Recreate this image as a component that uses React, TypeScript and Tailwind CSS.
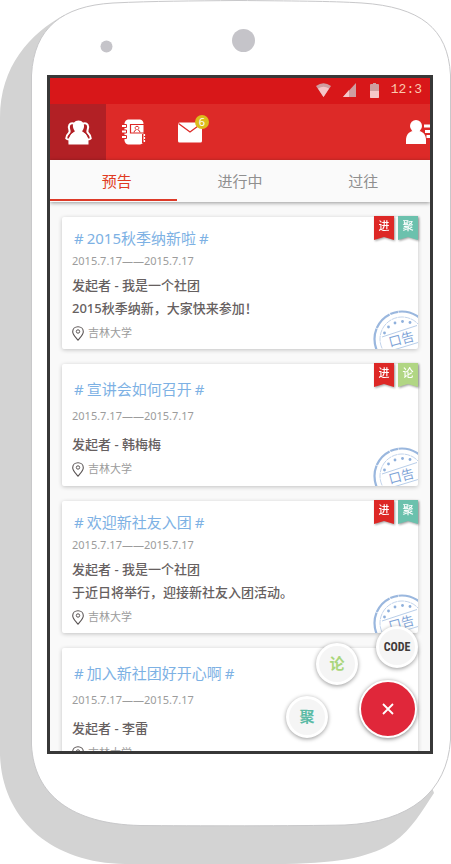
import React from "react";

type Ribbon = { text: string; tone: "red" | "teal" | "green" };

type Activity = {
  title: string;
  date: string;
  lines: string[];
  place: string;
  ribbons: Ribbon[];
  stamped: boolean;
};

const activities: Activity[] = [
  {
    title: "2015秋季纳新啦",
    date: "2015.7.17——2015.7.17",
    lines: ["发起者 - 我是一个社团", "2015秋季纳新，大家快来参加！"],
    place: "吉林大学",
    ribbons: [
      { text: "进", tone: "red" },
      { text: "聚", tone: "teal" },
    ],
    stamped: true,
  },
  {
    title: "宣讲会如何召开",
    date: "2015.7.17——2015.7.17",
    lines: ["发起者 - 韩梅梅"],
    place: "吉林大学",
    ribbons: [
      { text: "进", tone: "red" },
      { text: "论", tone: "green" },
    ],
    stamped: true,
  },
  {
    title: "欢迎新社友入团",
    date: "2015.7.17——2015.7.17",
    lines: ["发起者 - 我是一个社团", "于近日将举行，迎接新社友入团活动。"],
    place: "吉林大学",
    ribbons: [
      { text: "进", tone: "red" },
      { text: "聚", tone: "teal" },
    ],
    stamped: true,
  },
  {
    title: "加入新社团好开心啊",
    date: "2015.7.17——2015.7.17",
    lines: ["发起者 - 李雷"],
    place: "吉林大学",
    ribbons: [],
    stamped: false,
  },
];

const ribbonTone = {
  red: "bg-[#dd2826]",
  teal: "bg-[#6bc1ad]",
  green: "bg-[#b1d684]",
};

function PhoneBody() {
  return (
    <svg
      className="absolute inset-0 h-full w-full"
      viewBox="0 0 451 864"
      preserveAspectRatio="none"
      aria-hidden="true"
    >
      <path
        d="M64 15 C30 34 0 66 0 118 V755 C2 818 50 863 125 864 H285 C345 863 372 856 394 842 C412 829 422 811 434 793 L400 700 L100 60 Z"
        fill="#d3d3d3"
      />
      <path
        d="M31.500 75 C34 28 62 6 113 3 C155 1 190 1 238 0.500 C290 1 330 1 362 3 C420 7 448 28 450.500 75 V740 C447 792 410 822 345 825 C300 826 190 826 140 825.500 C72 824 34 795 31.500 745 Z"
        fill="#ffffff"
        stroke="#c8c8ca"
        strokeWidth="1"
      />
      <circle cx="106.500" cy="46.500" r="6" fill="#c5c4c9" />
      <circle cx="243.500" cy="40.500" r="11.500" fill="#c5c4c9" />
    </svg>
  );
}

function StatusBar() {
  return (
    <div className="flex h-[26px] shrink-0 items-center justify-end bg-[#d81719] pr-2 pb-0.5">
      <svg className="mr-3" width="15" height="14" viewBox="0 0 15 14" aria-hidden="true">
        <path d="M0 3 Q7.500 -2.500 15 3 L7.500 14 Z" fill="#cf9ea0" />
        <path d="M2 5.500 Q7.500 2 13 5.500 L7.500 14 Z" fill="#f6c6c8" />
      </svg>
      <svg className="mr-3.5" width="13" height="14" viewBox="0 0 13 14" aria-hidden="true">
        <path d="M13 0 V14 H0 Z" fill="#cf9ea0" />
        <path d="M6 7 V14 H0 Z" fill="#f6c6c8" />
      </svg>
      <svg className="mr-3" width="9" height="15" viewBox="0 0 9 15" aria-hidden="true">
        <path d="M3 0 H6 V1 H8 Q9 1 9 2 V14 Q9 15 8 15 H1 Q0 15 0 14 V2 Q0 1 1 1 H3 Z" fill="#cf9ea0" />
        <path d="M0 8 H9 V14 Q9 15 8 15 H1 Q0 15 0 14 Z" fill="#f6c6c8" />
      </svg>
      <span className="font-['Liberation_Mono',monospace] text-[13px] leading-4 text-[#fbc9ae]">12:3</span>
    </div>
  );
}

function GroupIcon() {
  return (
    <svg width="27" height="25" viewBox="0 0 27 25" aria-hidden="true">
      <g fill="none" stroke="#fff" strokeWidth="2" strokeLinejoin="round" strokeLinecap="round">
        <path d="M8.500 3.500 C4.500 2.500 3 6 4.300 9.500 C5 11.500 5 12.500 3.500 13.500 C1.800 15 1.200 17 1.200 18.500 C2 19.500 3 19.500 4 19.500" />
        <path d="M18.500 3.500 C22.500 2.500 24 6 22.700 9.500 C22 11.500 22 12.500 23.500 13.500 C25.200 15 25.800 17 25.800 18.500 C25 19.500 24 19.500 23 19.500" />
      </g>
      <path
        d="M13.500 0.500 C17.500 0.500 19.500 3.500 19 7 C18.700 9 17.800 10.300 17 11.300 C21.500 13 24 16.500 23.500 24.500 H3.500 C3 16.500 5.500 13 10 11.300 C9.200 10.300 8.300 9 8 7 C7.500 3.500 9.500 0.500 13.500 0.500 Z"
        fill="#fff"
      />
      <path d="M7 8 C7.300 10 8 11 8.500 11.500 C5.500 13 4 15 3.300 17.500" fill="none" stroke="#b22025" strokeWidth="1.200" />
      <path d="M20 8 C19.700 10 19 11 18.500 11.500 C21.500 13 23 15 23.700 17.500" fill="none" stroke="#b22025" strokeWidth="1.200" />
    </svg>
  );
}

function ContactsIcon() {
  return (
    <svg width="24" height="26" viewBox="0 0 24 26" aria-hidden="true">
      <path
        d="M6 0.500 H18 Q21.500 1 21.500 5 V21 Q21.500 25 18 25.500 H6 Q3 25 2.500 21.500 V4.500 Q3 1 6 0.500 Z"
        fill="#fff"
      />
      <g fill="#fff" stroke="#dd2826" strokeWidth="1">
        <path d="M-0.500 5.500 H4.500 V8.500 H-0.500 Z" />
        <path d="M-0.500 11 H4.500 V14 H-0.500 Z" />
        <path d="M-0.500 16.500 H4.500 V19.500 H-0.500 Z" />
      </g>
      <path d="M22 5.500 H8.500 V14 H22" fill="none" stroke="#dd2826" strokeWidth="1.200" />
      <path
        d="M12 13.500 Q12 11.500 14.300 10.700 Q13 9.700 13.200 8.500 Q13.500 7.300 15 7.300 Q16.500 7.300 16.800 8.500 Q17 9.700 15.700 10.700 Q18 11.500 18 13.500"
        fill="none"
        stroke="#dd2826"
        strokeWidth="1"
      />
      <path d="M20.500 15 V24" stroke="#dd2826" strokeWidth="1" />
      <path d="M22.500 15 V24" stroke="#fff" strokeWidth="1.200" strokeDasharray="2 1" />
    </svg>
  );
}

function MailIcon() {
  return (
    <svg width="24" height="21" viewBox="0 0 24 21" aria-hidden="true">
      <rect x="0" y="0.500" width="24" height="20" rx="1.500" fill="#fff" />
      <path d="M0.500 1.500 L12 10 L23.500 1.500" fill="none" stroke="#dd2826" strokeWidth="1.300" />
    </svg>
  );
}

function ProfileIcon() {
  return (
    <svg width="24" height="24" viewBox="0 0 24 24" aria-hidden="true">
      <circle cx="10" cy="6" r="6" fill="#fff" />
      <path d="M0 24 V20 C0 15 3 11.500 7 11 H13 C17 11.500 20 15 20 20 V24 Z" fill="#fff" />
      <path d="M18 4.500 H25 V7.500 H18 Z M19 10 H25 V13 H19 Z M20.500 15 H25 V18 H20.500 Z" fill="#fff" />
    </svg>
  );
}

function Toolbar() {
  const button = "flex h-full w-14 items-center justify-center";
  return (
    <header className="flex h-14 shrink-0 items-center bg-[#dd2a28]">
      <button type="button" aria-label="社团" className={`${button} bg-[#b22025]`}>
        <GroupIcon />
      </button>
      <button type="button" aria-label="通讯录" className={button}>
        <ContactsIcon />
      </button>
      <button type="button" aria-label="消息" className={button}>
        <span className="relative">
          <MailIcon />
          <span className="absolute -top-[7px] -right-[7px] size-3.5 rounded-full bg-[#dcbc1c] text-center text-[11px] leading-3.5 text-white">
            6
          </span>
        </span>
      </button>
      <button type="button" aria-label="个人" className="ml-auto flex h-full items-center">
        <ProfileIcon />
      </button>
    </header>
  );
}

function Tabs() {
  return (
    <nav className="relative z-10 h-[42px] shrink-0 bg-[#fafafa] shadow-[0_1px_4px_rgba(0,0,0,0.4)]">
      <div className="grid h-[39px] grid-cols-3 px-[5px] pt-1 text-[15px] text-[#8f8f8f]">
        <button type="button" aria-current="page" className="text-[#e03a22]">
          预告
        </button>
        <button type="button">进行中</button>
        <button type="button">过往</button>
      </div>
      <div className="h-0.5 w-1/3 bg-[#dd3a28]" />
    </nav>
  );
}

function Stamp() {
  return (
    <svg
      className="absolute right-0 bottom-0"
      width="45"
      height="39"
      viewBox="0 0 45 39"
      aria-hidden="true"
    >
      <g fill="none" stroke="#9ab7de">
        <circle cx="29" cy="29" r="27.500" strokeWidth="2.200" strokeDasharray="34 0.600 19 0.800 8 0.500" />
        <circle cx="29" cy="29" r="22" strokeWidth="0.600" strokeDasharray="6 0.600" />
        <path d="M9 27 L44 15.500" strokeWidth="0.700" />
        <path d="M22 39.500 L45 32.500" strokeWidth="0.700" />
      </g>
      <g fill="#8fb0dc">
        <circle cx="11.500" cy="23" r="1.400" />
        <circle cx="15.500" cy="17" r="1.400" />
        <circle cx="22" cy="13" r="1.400" />
        <circle cx="29.500" cy="11.500" r="1.400" />
        <circle cx="37" cy="12.500" r="1.400" />
      </g>
      <text
        x="17"
        y="37"
        fontSize="13"
        fill="#7fa5d8"
        transform="rotate(-15 17 37)"
        className="font-['Noto_Sans_CJK_SC',sans-serif]"
      >
        口告
      </text>
    </svg>
  );
}

function PinIcon() {
  return (
    <svg width="12" height="15" viewBox="0 0 12 15" fill="none" stroke="#5a5454" aria-hidden="true">
      <path d="M6 14.200 C3 10.500 0.700 8.500 0.700 5.700 C0.700 2.800 3 0.700 6 0.700 C9 0.700 11.300 2.800 11.300 5.700 C11.300 8.500 9 10.500 6 14.200 Z" strokeWidth="1.100" />
      <circle cx="6" cy="5.500" r="1.700" strokeWidth="1" />
    </svg>
  );
}

function ActivityCard({ item }: { item: Activity }) {
  const roomy = item.lines.length === 1;
  return (
    <article
      className={`relative rounded-xs bg-white px-2.5 shadow-[0_1px_4px_rgba(0,0,0,0.22)] ${
        roomy ? "pt-[13px] pb-[5px]" : "pt-[9px] pb-[3px]"
      }`}
    >
      {item.stamped && <Stamp />}
      <h2 className="flex gap-[3px] pl-0.5 text-[15px] leading-6 text-[#7db1e4]">
        <span>#</span>
        <span>{item.title}</span>
        <span>#</span>
      </h2>
      <p className={`text-[11px] text-[#9c9c9c] ${roomy ? "leading-[30px]" : "leading-[22px]"}`}>{item.date}</p>
      <div className={roomy ? "" : "pt-0.5"}>
        {item.lines.map((line) => (
          <p
            key={line}
            className={`text-[13px] font-medium text-[#666060] ${roomy ? "leading-[26px]" : "leading-[23px]"}`}
          >
            {line}
          </p>
        ))}
      </div>
      <p className={`flex items-center gap-1 text-[11px] text-[#9c9c9c] ${roomy ? "h-6" : "h-[26px]"}`}>
        <PinIcon />
        {item.place}
      </p>
      <div className="absolute -top-px right-0 flex gap-1">
        {item.ribbons.map((ribbon) => (
          <span key={ribbon.text} className="drop-shadow-[1px_1px_1px_rgba(0,0,0,0.4)]">
            <span
              className={`block h-6 w-5 text-center text-[11px] leading-5 font-medium text-white [clip-path:polygon(0_0,100%_0,100%_100%,50%_88%,0_100%)] ${ribbonTone[ribbon.tone]}`}
            >
              {ribbon.text}
            </span>
          </span>
        ))}
      </div>
    </article>
  );
}

function FloatingMenu() {
  const bubble =
    "absolute flex size-[42px] items-center justify-center rounded-full border-3 border-white bg-[#f5f5f5] shadow-[0_1px_4px_rgba(0,0,0,0.4)]";
  return (
    <div className="absolute right-0 bottom-0 z-20">
      <button
        type="button"
        className={`${bubble} right-3 bottom-[83px] font-['Liberation_Sans_Narrow','Roboto_Condensed','Liberation_Sans',sans-serif] text-xs font-bold text-[#403a38]`}
      >
        CODE
      </button>
      <button type="button" className={`${bubble} right-[72px] bottom-[66px] pb-0.5 text-[15px] font-bold text-[#a9d67c]`}>
        论
      </button>
      <button type="button" className={`${bubble} right-[102px] bottom-[13px] pb-0.5 text-[15px] font-bold text-[#5bbba5]`}>
        聚
      </button>
      <button
        type="button"
        aria-label="关闭"
        className="absolute right-[13px] bottom-[13px] flex size-[58px] items-center justify-center rounded-full border-2 border-white bg-[#e0273a] shadow-[0_1px_4px_rgba(0,0,0,0.5)]"
      >
        <svg width="12" height="12" viewBox="0 0 12 12" aria-hidden="true">
          <path d="M1 1 L11 11 M11 1 L1 11" stroke="#fff" strokeWidth="1.800" />
        </svg>
      </button>
    </div>
  );
}

export default function App() {
  return (
    <div className="relative flex h-screen flex-col bg-white pt-[75px] pr-[18px] pb-[110px] pl-[47px] font-['Noto_Sans','Noto_Sans_CJK_SC',sans-serif]">
      <PhoneBody />
      <main className="relative flex min-h-0 flex-1 flex-col overflow-hidden border-3 border-[#383838] bg-[#f9f9f9]">
        <StatusBar />
        <Toolbar />
        <Tabs />
        <section className="flex min-h-0 flex-1 flex-col gap-[15px] overflow-hidden px-3 pt-[15px]">
          {activities.map((item) => (
            <ActivityCard key={item.title} item={item} />
          ))}
        </section>
        <FloatingMenu />
      </main>
    </div>
  );
}
